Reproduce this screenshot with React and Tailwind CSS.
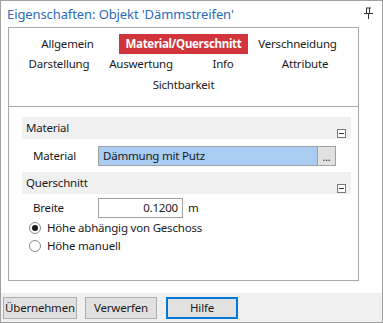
import React from "react";

const F = { fontFamily: '"Noto Sans", "Open Sans", sans-serif' };

function Minus() {
  return (
    <div className="w-[9px] h-[9px] border border-[#7a7a7a] bg-white flex items-center justify-center">
      <div className="w-[5px] h-px bg-[#333]" />
    </div>
  );
}

function Section({ title }) {
  return (
    <div className="h-[22px] bg-[#f0f0f0] flex justify-between pl-[4px] pr-[5px]">
      <span className="self-center text-[11.5px] tracking-[-0.2px] text-[#1a1a1a] leading-none">{title}</span>
      <div className="self-end mb-[1px]">
        <Minus />
      </div>
    </div>
  );
}

function Radio({ checked, label }) {
  return (
    <div className="flex items-center h-[18px] pl-[7px]">
      <div className="w-[12px] h-[12px] rounded-full border border-[#8a8a8a] bg-white flex items-center justify-center">
        {checked && <div className="w-[6px] h-[6px] rounded-full bg-[#1a1a1a]" />}
      </div>
      <span className="ml-[6px] text-[11.5px] tracking-[-0.2px] text-[#1a1a1a] leading-none">{label}</span>
    </div>
  );
}

function Btn({ children, focused, w }) {
  return (
    <div
      className={
        "h-[22px] flex items-center justify-center text-[11.5px] tracking-[-0.2px] text-[#1a1a1a] bg-[#e1e1e1] " +
        (focused ? "border-2 border-[#0078d7]" : "border border-[#adadad]")
      }
      style={{ width: w }}
    >
      {children}
    </div>
  );
}

export default function App() {
  return (
    <div className="w-[383px] h-[323px] border border-[#a0a0a0] bg-white flex flex-col" style={F}>
      <div className="h-[26px] flex items-center justify-between pl-[6px] pr-[9px]">
        <span className="text-[13px] tracking-[-0.1px] text-[#2b6cb8] leading-none">Eigenschaften: Objekt 'Dämmstreifen'</span>
        <svg width="9" height="12" viewBox="0 0 9 12" className="mt-[-2px]">
          <rect x="2" y="0.5" width="5" height="1" fill="#333" />
          <rect x="2" y="1" width="1" height="6" fill="#333" />
          <rect x="5" y="1" width="1" height="6" fill="#333" />
          <rect x="0" y="6" width="9" height="1" fill="#333" />
          <rect x="4" y="7" width="1" height="5" fill="#333" />
        </svg>
      </div>
      <div className="ml-[7px] w-[351px] h-[254px] border border-[#a8a8a8] flex flex-col">
        <div className="h-[79px] border-b border-[#a8a8a8] pt-[6px] text-[11.5px] tracking-[-0.2px] text-[#1a1a1a] leading-none">
          <div className="h-[20px] flex items-center pl-[26px]">
            <div className="w-[65px] text-center">Allgemein</div>
            <div className="ml-[19px] w-[129px] h-[20px] bg-[#d1343a] text-white font-bold tracking-[-0.3px] flex items-center justify-center">
              Material/Querschnitt
            </div>
            <div className="ml-[5px] w-[89px] text-center">Verschneidung</div>
          </div>
          <div className="h-[20px] flex items-center pl-[9px]">
            <div className="w-[82px] text-center">Darstellung</div>
            <div className="w-[82px] text-center">Auswertung</div>
            <div className="w-[82px] text-center">Info</div>
            <div className="w-[82px] text-center">Attribute</div>
          </div>
          <div className="h-[21px] flex items-center justify-center">
            <div>Sichtbarkeit</div>
          </div>
        </div>
        <div className="pt-[10px] pl-[13px] pr-[7px] flex flex-col">
          <Section title="Material" />
          <div className="mt-[7px] flex items-center h-[20px] pl-[11px]">
            <span className="w-[65px] text-[11.5px] tracking-[-0.2px] text-[#1a1a1a] leading-none">Material</span>
            <div className="w-[238px] h-[20px] border border-[#a0a0a0] flex">
              <div className="flex-1 bg-[#a9ccf2] flex items-center pl-[4px] text-[11.5px] tracking-[-0.2px] text-[#1a1a1a] leading-none">
                Dämmung mit Putz
              </div>
              <div className="w-[18px] border-l border-[#a0a0a0] bg-[#e1e1e1] flex items-center justify-center text-[10px] text-[#1a1a1a] leading-none pt-[2px]">
                ...
              </div>
            </div>
          </div>
          <div className="mt-[6px]">
            <Section title="Querschnitt" />
          </div>
          <div className="mt-[4px] flex items-center h-[20px] pl-[11px]">
            <span className="w-[65px] text-[11.5px] tracking-[-0.2px] text-[#1a1a1a] leading-none">Breite</span>
            <div className="w-[85px] h-[20px] border border-[#a0a0a0] flex items-center justify-end pr-[4px] text-[11.5px] tracking-[-0.2px] text-[#1a1a1a] leading-none">
              0.1200
            </div>
            <span className="ml-[5px] text-[11.5px] text-[#1a1a1a] leading-none">m</span>
          </div>
          <div className="mt-[1px]">
            <Radio checked label="Höhe abhängig von Geschoss" />
            <Radio label="Höhe manuell" />
          </div>
        </div>
      </div>
      <div className="flex-1" />
      <div className="h-[29px] bg-[#f0f0f0] flex items-center pl-[2px]">
        <Btn w="74px">Übernehmen</Btn>
        <div className="ml-[8px]">
          <Btn w="72px">Verwerfen</Btn>
        </div>
        <div className="ml-[9px]">
          <Btn w="72px" focused>Hilfe</Btn>
        </div>
      </div>
    </div>
  );
}
